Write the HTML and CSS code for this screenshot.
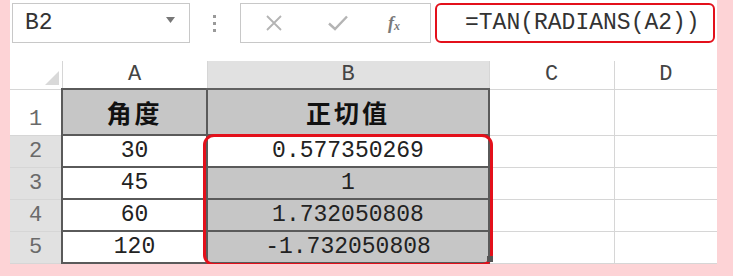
FILE: index.html
```html
<!DOCTYPE html>
<html lang="zh-CN">
<head>
    <meta charset="UTF-8">
    <title>正切值</title>
    <link rel="stylesheet" href="styles.css">
</head>
<body>
    <div class="sheet">
        <div class="toolbar">
            <div class="namebox">
                <span>B2</span>
                <svg class="caret" width="9" height="6" viewBox="0 0 9 6"><path d="M0 0h9L4.5 6z" fill="#777"/></svg>
            </div>
            <div class="dots"><i></i><i></i><i></i></div>
            <div class="fbuttons">
                <svg class="btn" width="16" height="16" viewBox="0 0 16 16"><path d="M1 1L15 15M15 1L1 15" stroke="#b4b4b4" stroke-width="1.8"/></svg>
                <svg class="btn" width="20" height="16" viewBox="0 0 20 16"><path d="M1 8.5L7 14L19 1.5" fill="none" stroke="#b4b4b4" stroke-width="2.4"/></svg>
                <span class="fx">f<sub>x</sub></span>
            </div>
            <div class="formula">=TAN(RADIANS(A2))</div>
        </div>

        <table class="grid">
            <colgroup>
                <col class="c-row">
                <col class="c-a">
                <col class="c-b">
                <col class="c-c">
                <col class="c-d">
            </colgroup>
            <tr class="colhead">
                <th class="corner"><span class="tri"></span></th>
                <th>A</th>
                <th class="sel">B</th>
                <th>C</th>
                <th>D</th>
            </tr>
            <tr class="r1">
                <th class="rowhead">1</th>
                <td class="head">角度</td>
                <td class="head">正切值</td>
                <td></td>
                <td></td>
            </tr>
            <tr>
                <th class="rowhead sel">2</th>
                <td class="box">30</td>
                <td class="box">0.577350269</td>
                <td></td>
                <td></td>
            </tr>
            <tr>
                <th class="rowhead sel">3</th>
                <td class="box">45</td>
                <td class="box shade">1</td>
                <td></td>
                <td></td>
            </tr>
            <tr>
                <th class="rowhead sel">4</th>
                <td class="box">60</td>
                <td class="box shade">1.732050808</td>
                <td></td>
                <td></td>
            </tr>
            <tr class="last">
                <th class="rowhead sel">5</th>
                <td class="box">120</td>
                <td class="box shade">-1.732050808</td>
                <td></td>
                <td></td>
            </tr>
        </table>

        <div class="mark"></div>
        <div class="handle"></div>
    </div>
</body>
</html>
```

FILE: styles.css
```css
body {
    margin: 0;
    background-color: #fdd3d6;
    font-family: "Liberation Mono", "Noto Sans CJK SC", monospace;
}
.sheet {
    position: relative;
    margin-left: 10px;
    width: 707px;
    height: 264px;
    background-color: #fff;
}

/* thanh công thức */
.toolbar {
    display: flex;
    align-items: center;
    height: 40px;
    padding-top: 3px;
}
.namebox {
    display: flex;
    align-items: center;
    justify-content: space-between;
    box-sizing: border-box;
    width: 178px;
    height: 40px;
    margin-left: 2px;
    padding: 0 14px 0 12px;
    border: 1px solid #c8c8c8;
    font-size: 23px;
    color: #333;
}
.caret {
    margin-bottom: 6px;
}
.dots {
    display: flex;
    flex-direction: column;
    gap: 4px;
    margin: 0 24px 0 23px;
}
.dots i {
    width: 3px;
    height: 3px;
    background-color: #9a9a9a;
}
.fbuttons {
    display: flex;
    align-items: center;
    box-sizing: border-box;
    width: 191px;
    height: 40px;
    padding-left: 25px;
    border: 1px solid #c8c8c8;
}
.fbuttons .btn {
    margin-right: 46px;
}
.fbuttons .btn + .btn {
    margin-right: 40px;
}
.fx {
    font-family: "Liberation Serif", serif;
    font-style: italic;
    font-weight: bold;
    font-size: 18px;
    color: #7a7a7a;
}
.fx sub {
    font-size: 12px;
    vertical-align: -1px;
}
.formula {
    box-sizing: border-box;
    width: 280px;
    height: 40px;
    margin-left: 4px;
    padding: 5px 0 0 28px;
    border: 2px solid #e3101b;
    border-radius: 6px;
    font-size: 23px;
    color: #333;
    white-space: nowrap;
}

/* bảng tính */
.grid {
    margin-top: 18px;
    border-collapse: collapse;
    table-layout: fixed;
    width: 707px;
    font-size: 23px;
    color: #222;
}
.c-row { width: 52px; }
.c-a { width: 145px; }
.c-b { width: 282px; }
.c-c { width: 125px; }
.c-d { width: 103px; }
th, td {
    padding: 0;
    border: 1px solid #d6d6d6;
    text-align: center;
    font-weight: normal;
}
.colhead th {
    height: 27px;
    border-top: none;
    color: #444;
    font-size: 22px;
}
.colhead th.sel {
    background-color: #e1e1e1;
    border-bottom: 2px solid #616161;
}
.corner {
    position: relative;
    border-left: none;
}
.tri {
    position: absolute;
    right: 3px;
    bottom: 4px;
    border-style: solid;
    border-width: 0 0 14px 14px;
    border-color: transparent transparent #d9d9d9 transparent;
}
.r1 td,
.r1 th {
    height: 44px;
}
tr td,
tr th {
    height: 30px;
}
.rowhead {
    border-left: none;
    color: #6a6a6a;
    font-size: 22px;
}
.r1 .rowhead {
    vertical-align: bottom;
    padding-bottom: 0;
    line-height: 30px;
}
.rowhead.sel {
    background-color: #e1e1e1;
    border-right: 2px solid #5a5a5a;
}
td.head {
    background-color: #c6c6c6;
    border: 2px solid #5a5a5a;
    font-family: "Noto Sans CJK SC", sans-serif;
    font-weight: bold;
    font-size: 25px;
    letter-spacing: 3px;
    color: #111;
}
td.box {
    border: 2px solid #5a5a5a;
}
td.shade {
    background-color: #c6c6c6;
}
.last td,
.last th {
    height: 30px;
}
td:last-child,
th:last-child {
    border-right: none;
}

/* khung đỏ đánh dấu */
.mark {
    position: absolute;
    left: 193px;
    top: 134px;
    width: 284px;
    height: 126px;
    border: 3px solid #e3101b;
    border-radius: 11px;
}
.handle {
    position: absolute;
    left: 477px;
    top: 256px;
    width: 6px;
    height: 6px;
    background-color: #555;
}
```
